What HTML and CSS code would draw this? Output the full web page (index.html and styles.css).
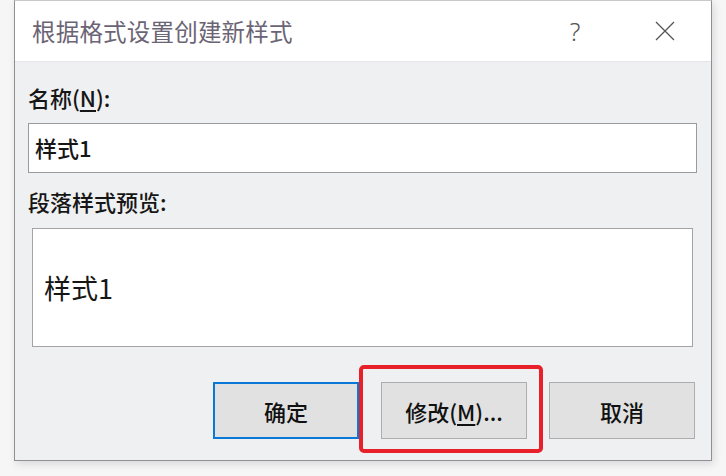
FILE: index.html
```html
<!DOCTYPE html>
<html lang="zh-CN">
<head>
<meta charset="utf-8">
<title>根据格式设置创建新样式</title>
<link rel="stylesheet" href="styles.css">
</head>
<body>
<div class="window">
  <div class="titlebar">
    <span class="title">根据格式设置创建新样式</span>
    <span class="tb-btn help">?</span>
    <span class="tb-btn close">
      <svg width="20" height="20" viewBox="0 0 20 20"><path d="M1 1 L19 19 M19 1 L1 19" stroke="#555" stroke-width="1.3" fill="none"/></svg>
    </span>
  </div>
  <div class="content">
    <div class="label">名称(<u>N</u>):</div>
    <div class="input">样式1</div>
    <div class="label label-preview">段落样式预览:</div>
    <div class="preview"><span>样式1</span></div>
    <div class="buttons">
      <div class="btn btn-default">确定</div>
      <div class="btn btn-highlight">修改(<u>M</u>)...</div>
      <div class="btn">取消</div>
    </div>
  </div>
</div>
</body>
</html>
```

FILE: styles.css
```css
* { box-sizing: border-box; }
html, body { margin: 0; padding: 0; }
body {
  width: 726px;
  height: 476px;
  background: #f6f6f6;
  padding-left: 14px;
  font-family: "Noto Sans CJK SC", "Noto Sans", sans-serif;
  color: #161616;
  overflow: hidden;
}
.window {
  width: 698px;
  height: 461px;
  border: 1px solid #8f8f95;
  border-top-color: #c8c8c8;
  background: #eff0f2;
  box-shadow: 2px 3px 8px rgba(0,0,0,0.12);
  display: flex;
  flex-direction: column;
}
.titlebar {
  height: 61px;
  background: #ffffff;
  border-bottom: 1px solid #e6e6e8;
  display: flex;
  align-items: center;
  padding-left: 17px;
  padding-right: 1px;
  flex-shrink: 0;
}
.title {
  font-size: 23.5px;
  line-height: 30px;
  color: #6b6474;
  letter-spacing: 0.2px;
}
.tb-btn {
  width: 90px;
  height: 61px;
  display: flex;
  align-items: center;
  justify-content: center;
}
.help {
  margin-left: auto;
  font-family: "Noto Sans", sans-serif;
  font-weight: 300;
  font-size: 25px;
  color: #555;
  padding-top: 0;
}
.content {
  padding: 20px 14px 0 13px;
  display: flex;
  flex-direction: column;
}
.label {
  font-size: 22px;
  line-height: 30px;
  height: 30px;
  font-weight: 500;
}
.label u { text-underline-offset: 3px; }
.input {
  margin-top: 11px;
  height: 50px;
  background: #fff;
  border: 1px solid #9a9aa0;
  font-size: 22px;
  line-height: 46px;
  padding-left: 6px;
  font-weight: 500;
}
.label-preview {
  margin-top: 13px;
}
.preview {
  margin: 12px 4px 0 4px;
  height: 119px;
  background: #fff;
  border: 1px solid #a3a3a8;
  display: flex;
  align-items: center;
  padding-left: 11px;
  font-size: 27px;
}
.buttons {
  margin-top: 35px;
  display: flex;
  justify-content: flex-end;
  gap: 22px;
  padding-right: 2px;
}
.btn {
  position: relative;
  width: 146px;
  height: 57px;
  background: #e1e1e1;
  border: 1px solid #adadad;
  display: flex;
  align-items: center;
  justify-content: center;
  font-size: 22px;
  font-weight: 500;
  color: #111;
}
.btn u { text-underline-offset: 3px; }
.btn-default {
  border: 2px solid #0a78d6;
}
.btn-highlight::after {
  content: "";
  position: absolute;
  left: -23px;
  top: -18px;
  right: -17px;
  bottom: -15px;
  border: 4px solid #e8202a;
  border-radius: 5px;
}
```
